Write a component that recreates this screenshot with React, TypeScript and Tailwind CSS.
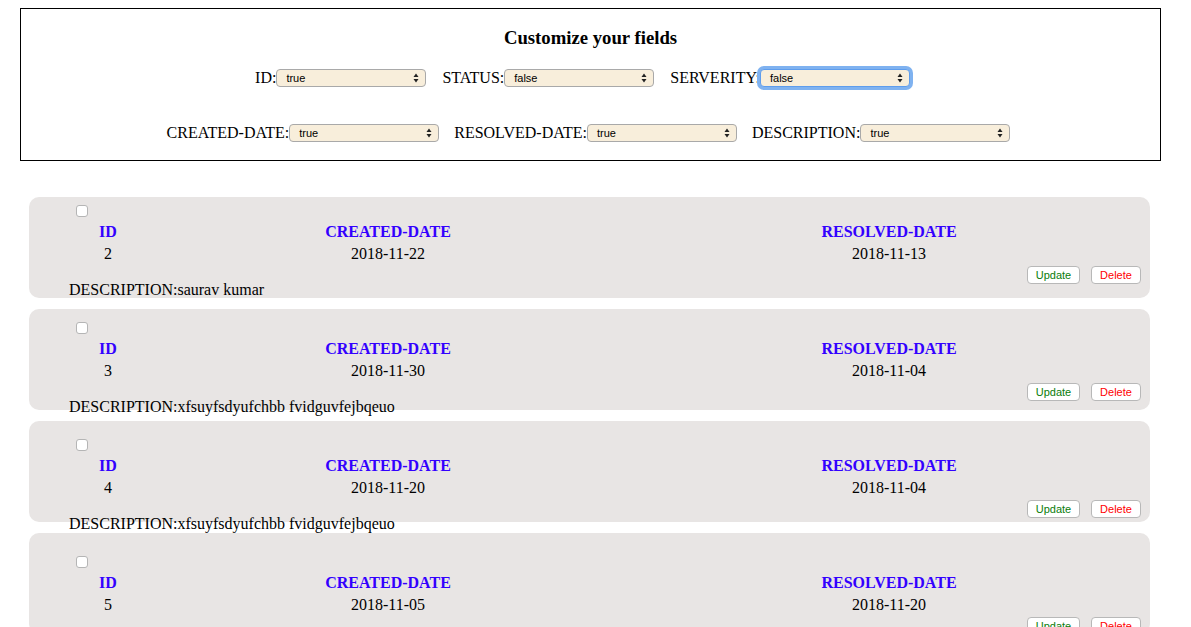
import React from "react";

type Issue = { id: number; created: string; resolved: string; description: string };

const issues: Issue[] = [
  { id: 2, created: "2018-11-22", resolved: "2018-11-13", description: "saurav kumar" },
  { id: 3, created: "2018-11-30", resolved: "2018-11-04", description: "xfsuyfsdyufchbb fvidguvfejbqeuo" },
  { id: 4, created: "2018-11-20", resolved: "2018-11-04", description: "xfsuyfsdyufchbb fvidguvfejbqeuo" },
  { id: 5, created: "2018-11-05", resolved: "2018-11-20", description: "xfsuyfsdyufchbb fvidguvfejbqeuo" },
];

function Arrows() {
  return (
    <svg width="6" height="10" viewBox="0 0 6 10" className="shrink-0">
      <path d="M3 0.5 L5.5 4 H0.5 Z" fill="#222" />
      <path d="M3 9.5 L5.5 6 H0.5 Z" fill="#222" />
    </svg>
  );
}

function FieldSelect({ label, value, focused = false }: { label: string; value: string; focused?: boolean }) {
  return (
    <label className="flex items-center text-[16px] text-black">
      <span>{label}:</span>
      <span
        className={`flex items-center justify-between w-[150px] h-[18px] pl-[9px] pr-[6px] rounded-[4px] bg-[#f8eedb] border font-['Liberation_Sans',Arial,sans-serif] text-[11px] leading-none text-black ${
          focused ? "border-[#5e9ded] ring-[3px] ring-[#7fb2f0]" : "border-[#a9a9a9]"
        }`}
      >
        {value}
        <Arrows />
      </span>
    </label>
  );
}

function Card({ issue, index }: { issue: Issue; index: number }) {
  return (
    <div className="h-[101px] mb-[11px] rounded-[10px] bg-[#e8e5e4]">
      {/* content drifts down a little more in every card, as in the source page */}
      <div className="pl-[40px]" style={{ paddingTop: 8 + index * 5 }}>
        <input type="checkbox" className="block ml-[7px] w-[12px] h-[12px] m-0 appearance-none rounded-[3px] border border-[#b5b5b5] bg-white" />
        <div className="grid grid-cols-[78px_482px_520px] text-center mt-[6px]">
          <div className="font-bold text-[#3300ff] leading-[18px]">ID</div>
          <div className="font-bold text-[#3300ff] leading-[18px]">CREATED-DATE</div>
          <div className="font-bold text-[#3300ff] leading-[18px]">RESOLVED-DATE</div>
          <div className="mt-[4px] leading-[18px]">{issue.id}</div>
          <div className="mt-[4px] leading-[18px]">{issue.created}</div>
          <div className="mt-[4px] leading-[18px]">{issue.resolved}</div>
        </div>
        <div className="flex justify-end gap-[11px] pr-[9px] mt-[3px] font-['Liberation_Sans',Arial,sans-serif] text-[11px]">
          <button className="w-[53px] h-[18px] rounded-[4px] bg-white border border-[#b8b8b8] text-[#0a7d0a] leading-none">Update</button>
          <button className="w-[50px] h-[18px] rounded-[4px] bg-white border border-[#b8b8b8] text-[#ff0000] leading-none">Delete</button>
        </div>
        <div className="-mt-[3px] leading-[18px]">DESCRIPTION:{issue.description}</div>
      </div>
    </div>
  );
}

export default function App() {
  return (
    <div className="min-h-[627px] bg-white font-['Liberation_Serif','Times_New_Roman',serif] text-[16px] text-black pt-[8px] overflow-hidden">
      <div className="mx-[20px] w-[1141px] h-[153px] border border-black">
        <h3 className="text-center font-bold text-[18.72px] leading-[22px] mt-[18px]">Customize your fields</h3>
        <div className="flex justify-center gap-[16px] pr-[16px] mt-[17px]">
          <FieldSelect label="ID" value="true" />
          <FieldSelect label="STATUS" value="false" />
          <FieldSelect label="SERVERITY" value="false" focused />
        </div>
        <div className="flex justify-center gap-[15px] pr-[4px] mt-[31px]">
          <FieldSelect label="CREATED-DATE" value="true" />
          <FieldSelect label="RESOLVED-DATE" value="true" />
          <FieldSelect label="DESCRIPTION" value="true" />
        </div>
      </div>

      <div className="ml-[29px] w-[1121px] mt-[36px]">
        {issues.map((issue, i) => (
          <Card key={issue.id} issue={issue} index={i} />
        ))}
      </div>
    </div>
  );
}
